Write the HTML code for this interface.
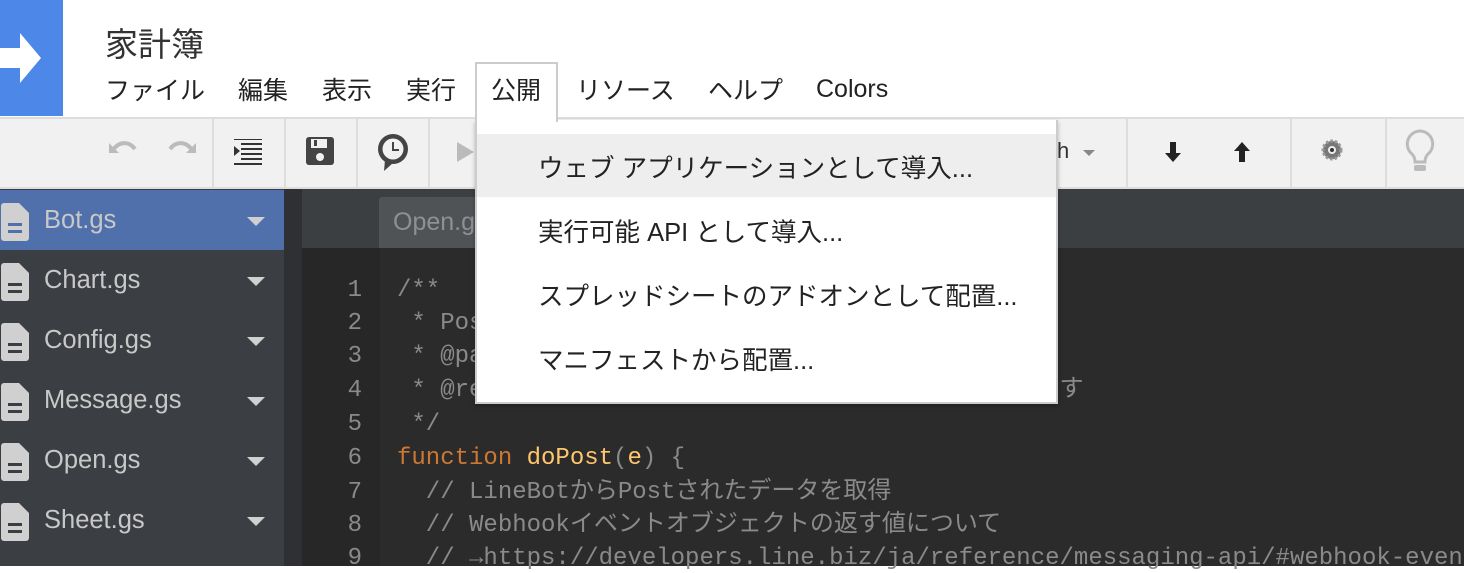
<!DOCTYPE html>
<html><head><meta charset="utf-8"><style>
*{margin:0;padding:0;box-sizing:border-box}
body{width:1464px;height:566px;overflow:hidden;position:relative;background:#fff;font-family:"Liberation Sans","Noto Sans CJK JP",sans-serif}
.abs{position:absolute}
#logo{left:0;top:0;width:63px;height:116px;background:#4d87e8}
#title{left:105px;top:18px;font-size:33px;color:#333}
.menu{top:71px;font-size:25px;color:#222;white-space:nowrap}
#tb{left:0;top:117px;width:1464px;height:72px;background:#f1f1f1;border-top:2px solid #ddd;border-bottom:2px solid #ddd}
.sep{top:119px;width:2px;height:68px;background:#ddd}
#side{left:0;top:189px;width:284px;height:377px;background:#3b3e42}
#gut1{left:284px;top:189px;width:18px;height:377px;background:#2e3033}
#tabs{left:302px;top:189px;width:1162px;height:59px;background:#3c3f42}
#tab{left:379px;top:197px;width:120px;height:51px;background:#505356;color:#8e9093;font-size:25px;padding:11px 0 0 14px;border-radius:3px 0 0 0}
#code{left:302px;top:248px;width:1162px;height:318px;background:#2b2b2b}
#lnbg{left:302px;top:248px;width:78px;height:318px;background:#272727}
.file{left:0;width:284px;height:60px;color:#c8c8c8;font-size:25.5px}
.file span{position:absolute;left:44px;top:16px}
.file .ic{position:absolute;left:1px;top:13px}
.file .ar{position:absolute;left:247px;top:27px;width:0;height:0;border-left:9px solid transparent;border-right:9px solid transparent;border-top:9px solid #d0d0d0}
.ln{left:310px;width:52px;text-align:right;font-family:"Liberation Mono",monospace;font-size:24px;line-height:28px;color:#8a8a8a}
.cl{left:397px;font-family:"Liberation Mono","Noto Sans CJK JP",monospace;font-size:24px;line-height:28px;height:28px;color:#8a8a8a;white-space:pre}
#dd{left:475px;top:120px;width:583px;height:284px;background:#fff;border:2px solid #ccc;border-top:none;box-shadow:0 2px 4px rgba(0,0,0,.25)}
.it{position:absolute;left:0;width:579px;height:63px;font-size:25.5px;color:#222;padding:14px 0 0 61px;white-space:nowrap}
</style></head><body>
<div id="logo" class="abs"><svg width="63" height="116"><path d="M0 48h20V33l21 25-21 25V68H0z" fill="#fff"/></svg></div>
<div id="title" class="abs">家計簿</div>
<div class="abs menu" style="left:105px">ファイル</div>
<div class="abs menu" style="left:238px">編集</div>
<div class="abs menu" style="left:322px">表示</div>
<div class="abs menu" style="left:406px">実行</div>
<div class="abs" style="left:475px;top:62px;width:83px;height:60px;border:2px solid #ccc;border-bottom:none;background:#fff;z-index:3"></div>
<div class="abs menu" style="left:491px;z-index:4">公開</div>
<div class="abs menu" style="left:576px">リソース</div>
<div class="abs menu" style="left:708px">ヘルプ</div>
<div class="abs menu" style="left:816px;top:75px">Colors</div>

<div id="tb" class="abs"></div>
<div class="abs sep" style="left:212px"></div>
<div class="abs sep" style="left:284px"></div>
<div class="abs sep" style="left:356px"></div>
<div class="abs sep" style="left:428px"></div>
<div class="abs sep" style="left:1126px"></div>
<div class="abs sep" style="left:1290px"></div>
<div class="abs sep" style="left:1385px"></div>
<svg class="abs" style="left:105px;top:135px" width="95" height="30"><path d="M8 15 C14 6 24 6 30 14" stroke="#bbb" stroke-width="4" fill="none"/><path d="M4 8v10h10z" fill="#bbb"/><path d="M87 15 C81 6 71 6 65 14" stroke="#bbb" stroke-width="4" fill="none"/><path d="M91 8v10H81z" fill="#bbb"/></svg>
<svg class="abs" style="left:232px;top:139px" width="32" height="26"><path d="M2 0h28M9 5h21M9 10h21M9 15h21M9 20h21M2 25h28" stroke="#333" stroke-width="2"/><path d="M2 7l6 5-6 5z" fill="#333"/></svg>
<svg class="abs" style="left:305px;top:136px" width="30" height="30"><rect x="1" y="1" width="28" height="28" rx="3" fill="#444"/><rect x="6" y="3" width="16" height="9" fill="#f1f1f1"/><rect x="9" y="4" width="3" height="6" fill="#444"/><circle cx="15" cy="21" r="4" fill="#f1f1f1"/></svg>
<svg class="abs" style="left:375px;top:132px" width="36" height="40"><circle cx="18" cy="17" r="15" fill="#444"/><path d="M10 28l-1 11 9-8z" fill="#444"/><circle cx="18" cy="17" r="10.5" fill="#f1f1f1"/><path d="M18 10v8h6" stroke="#444" stroke-width="2" fill="none"/></svg>
<svg class="abs" style="left:455px;top:140px" width="20" height="24"><path d="M2 2l17 10-17 10z" fill="#bbb"/></svg>
<div class="abs" style="left:1046px;top:138px;font-size:22px;color:#333">ch</div>
<div class="abs" style="left:1083px;top:150px;border-left:6px solid transparent;border-right:6px solid transparent;border-top:6px solid #888"></div>
<svg class="abs" style="left:1163px;top:140px" width="90" height="24"><path d="M7 2h6v11h5l-8 9-8-9h5z" fill="#222"/><path d="M76 22h6V11h5l-8-9-8 9h5z" fill="#222"/></svg>
<svg class="abs" style="left:1321px;top:139px" width="22" height="22"><circle cx="11" cy="11" r="9" fill="#777" stroke="#999" stroke-width="3" stroke-dasharray="2.5 2"/><circle cx="11" cy="11" r="4" fill="#eee"/><circle cx="11" cy="11" r="2" fill="#333"/></svg>
<svg class="abs" style="left:1403px;top:128px" width="34" height="48"><path d="M17 3a13 13 0 0 0-8 23c2 2 3 5 3 8h10c0-3 1-6 3-8A13 13 0 0 0 17 3z" fill="none" stroke="#bbb" stroke-width="3"/><rect x="11" y="37" width="12" height="6" rx="2" fill="#bbb"/></svg>

<div id="side" class="abs"></div>
<div id="gut1" class="abs"></div>
<div id="tabs" class="abs"></div>
<div id="tab" class="abs">Open.gs</div>
<div id="code" class="abs"></div>
<div id="lnbg" class="abs"></div>

<div class="abs file" style="top:190px;background:#5070ab"><svg class="ic" width="28" height="38"><path d="M3 0h15l10 10v25a3 3 0 0 1-3 3H3a3 3 0 0 1-3-3V3a3 3 0 0 1 3-3zM7 20h14v3H7zM7 27h14v3H7z" fill="#d0d0d0" fill-rule="evenodd"/></svg><span>Bot.gs</span><i class="ar"></i></div>
<div class="abs file" style="top:250px"><svg class="ic" width="28" height="38"><path d="M3 0h15l10 10v25a3 3 0 0 1-3 3H3a3 3 0 0 1-3-3V3a3 3 0 0 1 3-3zM7 20h14v3H7zM7 27h14v3H7z" fill="#d0d0d0" fill-rule="evenodd"/></svg><span>Chart.gs</span><i class="ar"></i></div>
<div class="abs file" style="top:310px"><svg class="ic" width="28" height="38"><path d="M3 0h15l10 10v25a3 3 0 0 1-3 3H3a3 3 0 0 1-3-3V3a3 3 0 0 1 3-3zM7 20h14v3H7zM7 27h14v3H7z" fill="#d0d0d0" fill-rule="evenodd"/></svg><span>Config.gs</span><i class="ar"></i></div>
<div class="abs file" style="top:370px"><svg class="ic" width="28" height="38"><path d="M3 0h15l10 10v25a3 3 0 0 1-3 3H3a3 3 0 0 1-3-3V3a3 3 0 0 1 3-3zM7 20h14v3H7zM7 27h14v3H7z" fill="#d0d0d0" fill-rule="evenodd"/></svg><span>Message.gs</span><i class="ar"></i></div>
<div class="abs file" style="top:430px"><svg class="ic" width="28" height="38"><path d="M3 0h15l10 10v25a3 3 0 0 1-3 3H3a3 3 0 0 1-3-3V3a3 3 0 0 1 3-3zM7 20h14v3H7zM7 27h14v3H7z" fill="#d0d0d0" fill-rule="evenodd"/></svg><span>Open.gs</span><i class="ar"></i></div>
<div class="abs file" style="top:490px"><svg class="ic" width="28" height="38"><path d="M3 0h15l10 10v25a3 3 0 0 1-3 3H3a3 3 0 0 1-3-3V3a3 3 0 0 1 3-3zM7 20h14v3H7zM7 27h14v3H7z" fill="#d0d0d0" fill-rule="evenodd"/></svg><span>Sheet.gs</span><i class="ar"></i></div>

<div class="abs ln" style="top:277px">1</div>
<div class="abs ln" style="top:310px">2</div>
<div class="abs ln" style="top:343px">3</div>
<div class="abs ln" style="top:377px">4</div>
<div class="abs ln" style="top:411px">5</div>
<div class="abs ln" style="top:445px">6</div>
<div class="abs ln" style="top:479px">7</div>
<div class="abs ln" style="top:512px">8</div>
<div class="abs ln" style="top:545px">9</div>
<div class="abs cl" style="top:277px">/**</div>
<div class="abs cl" style="top:310px"> * Post</div>
<div class="abs cl" style="top:343px"> * @param</div>
<div class="abs cl" style="top:377px"> * @return                                    す</div>
<div class="abs cl" style="top:411px"> */</div>
<div class="abs cl" style="top:445px"><span style="color:#cc7832">function</span> <span style="color:#ffc66d">doPost</span>(<span style="color:#ffc66d">e</span>) {</div>
<div class="abs cl" style="top:479px">  // LineBotからPostされたデータを取得</div>
<div class="abs cl" style="top:512px">  // Webhookイベントオブジェクトの返す値について</div>
<div class="abs cl" style="top:545px">  // →https://developers.line.biz/ja/reference/messaging-api/#webhook-event</div>

<div id="dd" class="abs">
<div class="it" style="top:14px;background:#eee">ウェブ アプリケーションとして導入...</div>
<div class="it" style="top:78px">実行可能 API として導入...</div>
<div class="it" style="top:142px">スプレッドシートのアドオンとして配置...</div>
<div class="it" style="top:206px">マニフェストから配置...</div>
</div>
</body></html>
